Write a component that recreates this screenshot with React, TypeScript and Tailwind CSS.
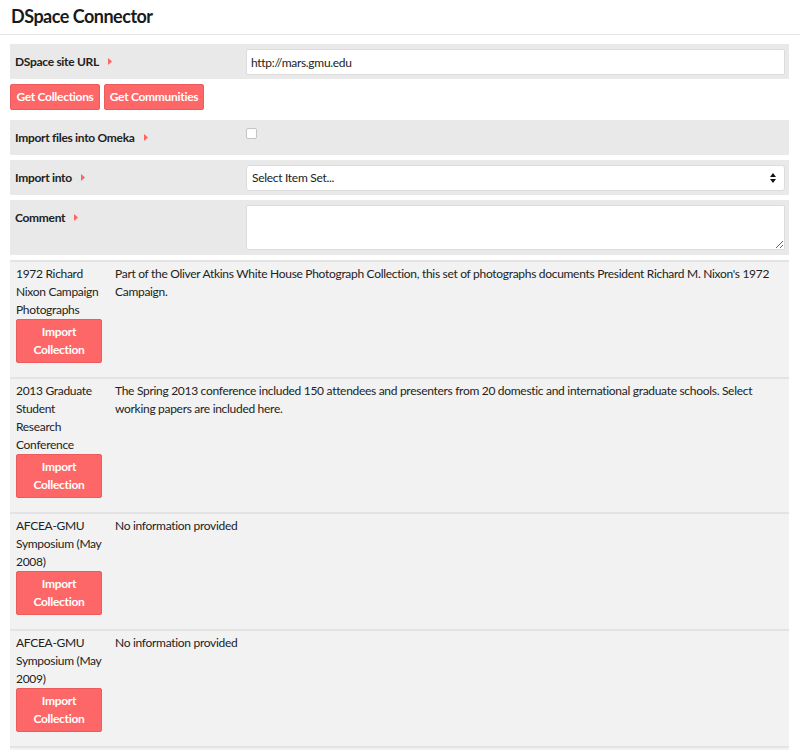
import React from 'react';

const collections = [
  {
    title: ['1972 Richard', 'Nixon Campaign', 'Photographs'],
    description:
      "Part of the Oliver Atkins White House Photograph Collection, this set of photographs documents President Richard M. Nixon's 1972 Campaign.",
  },
  {
    title: ['2013 Graduate', 'Student', 'Research', 'Conference'],
    description:
      'The Spring 2013 conference included 150 attendees and presenters from 20 domestic and international graduate schools. Select working papers are included here.',
  },
  { title: ['AFCEA-GMU', 'Symposium (May', '2008)'], description: 'No information provided' },
  { title: ['AFCEA-GMU', 'Symposium (May', '2009)'], description: 'No information provided' },
  { title: ['AFCEA-GMU', 'Symposium (May', '2010)'], description: 'No information provided' },
];

const Toggle = () => (
  <svg width="4" height="7" viewBox="0 0 4 7" className="inline-block ml-[9px] -mt-[2px]">
    <path d="M0 0 L4 3.5 L0 7 Z" fill="#fd6464" />
  </svg>
);

const Field = ({ label, children, tall }: { label: string; children?: React.ReactNode; tall?: boolean }) => (
  <div className={`flex bg-[#e9e9e9] pl-[5px] pr-[4px] pt-[5px] ${tall ? 'h-[55px]' : 'h-[35px]'}`}>
    <div className="w-[231px] shrink-0 pt-[4px] font-bold leading-[18px]">
      {label}
      <Toggle />
    </div>
    <div className="flex-1">{children}</div>
  </div>
);

const App = () => {
  return (
    <div className="min-h-screen bg-white text-[12px] tracking-[-0.3px] text-[#222] font-['Lato','Liberation_Sans',sans-serif]">
      <header className="h-[35px] border-b border-[#e6e6e6] px-[11px] flex items-center">
        <h1 className="text-[18px] font-bold tracking-[-0.5px] text-[#1a1a1a] -mt-[1px]">DSpace Connector</h1>
      </header>

      <form className="mx-[10px] mt-[9px] w-[779px]">
        <Field label="DSpace site URL">
          <input
            type="text"
            defaultValue="http://mars.gmu.edu"
            className="w-full h-[26px] bg-white border border-[#dcdcdc] rounded-[2px] px-[4px] text-[12px] text-[#222] outline-none"
          />
        </Field>

        <div className="flex gap-[4px] mt-[5px]">
          <button type="button" className="h-[26px] w-[90px] bg-[#fd6767] border border-[#ec5c5c] rounded-[2px] text-white font-bold">
            Get Collections
          </button>
          <button type="button" className="h-[26px] w-[100px] bg-[#fd6767] border border-[#ec5c5c] rounded-[2px] text-white font-bold">
            Get Communities
          </button>
        </div>

        <div className="mt-[10px] flex flex-col gap-[5px]">
          <Field label="Import files into Omeka">
            <input
              type="checkbox"
              className="appearance-none block mt-[3px] w-[11px] h-[11px] bg-white border border-[#c4c4c4] rounded-[2px]"
            />
          </Field>
          <Field label="Import into">
            <div className="relative h-[26px] bg-white border border-[#dcdcdc] rounded-[3px] flex items-center pl-[5px]">
              <span>Select Item Set...</span>
              <svg width="6" height="10" viewBox="0 0 6 10" className="absolute right-[8px] top-[7px]">
                <path d="M3 0 L6 4 L0 4 Z M0 6 L6 6 L3 10 Z" fill="#111" />
              </svg>
            </div>
          </Field>
          <Field label="Comment" tall>
            <textarea className="block w-full h-[45px] bg-white border border-[#dcdcdc] rounded-[2px] outline-none" />
          </Field>
        </div>

        <div className="mt-[5px] bg-[#f2f2f2]">
          {collections.map((c) => (
            <div key={c.title.join(' ')} className="flex border-t-2 border-[#e3e3e3] pt-[3px] pb-[14px] px-[6px] leading-[18px]">
              <div className="w-[86px] shrink-0">
                {c.title.map((line) => (
                  <div key={line} className="whitespace-nowrap">
                    {line}
                  </div>
                ))}
                <button
                  type="button"
                  className="w-[86px] h-[44px] bg-[#fd6767] border border-[#ec5c5c] rounded-[2px] text-white font-bold leading-[18px]"
                >
                  Import
                  <br />
                  Collection
                </button>
              </div>
              <div className="pl-[13px] pr-[6px] flex-1">{c.description}</div>
            </div>
          ))}
        </div>
      </form>
    </div>
  );
};

export default App;
